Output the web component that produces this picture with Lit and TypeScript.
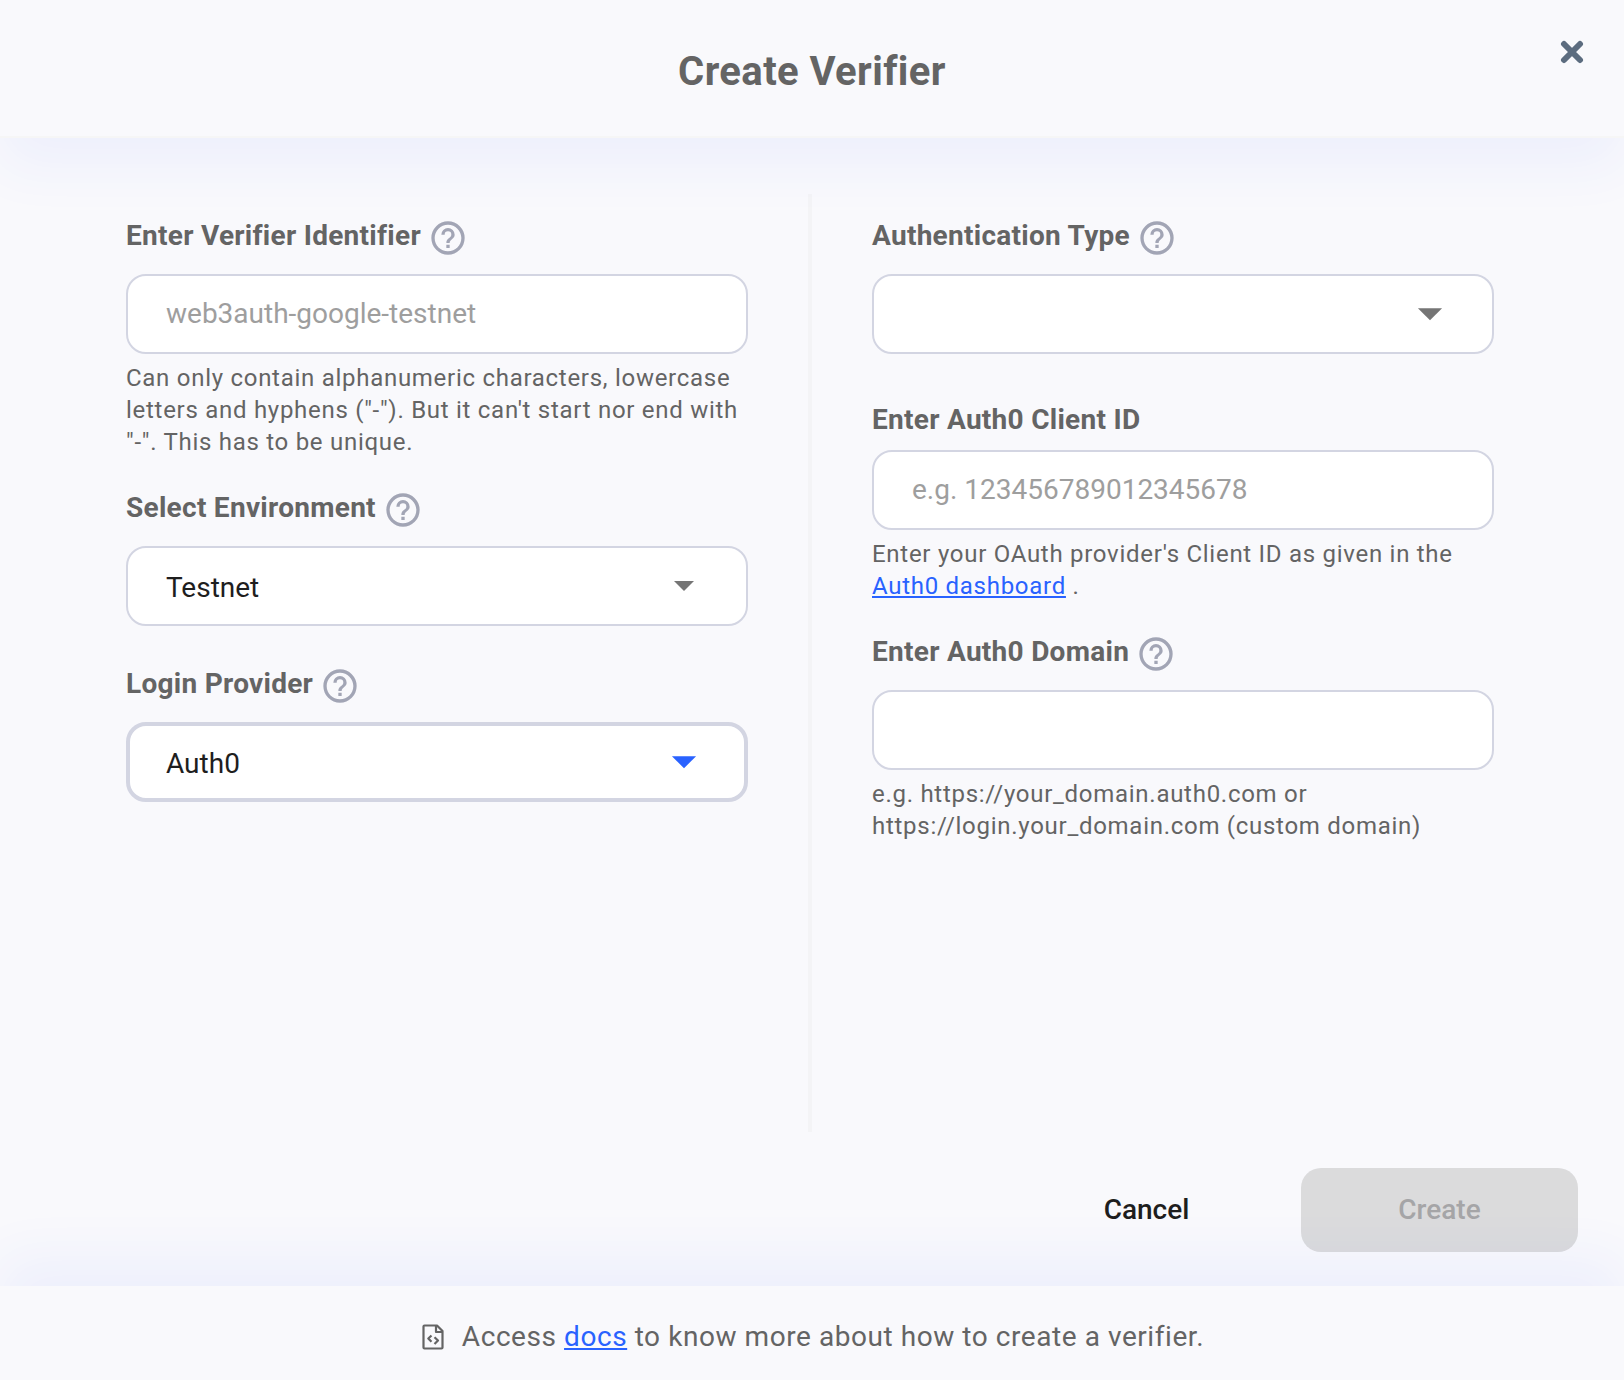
import { LitElement, html, css, svg, nothing, TemplateResult } from "lit";
import { customElement } from "lit/decorators.js";
import { classMap } from "lit/directives/class-map.js";

interface FieldSpec {
  id: string;
  label: string;
  help?: boolean;
  placeholder?: string;
  options?: string[];
  value?: string;
  active?: boolean;
  largeCaret?: boolean;
  hint?: TemplateResult;
}

const leftFields: FieldSpec[] = [
  {
    id: "verifier-id",
    label: "Enter Verifier Identifier",
    help: true,
    placeholder: "web3auth-google-testnet",
    hint: html`Can only contain alphanumeric characters, lowercase letters and hyphens ("-"). But it can't start nor end with "-". This has to be unique.`,
  },
  { id: "environment", label: "Select Environment", help: true, options: ["Testnet"], value: "Testnet" },
  { id: "provider", label: "Login Provider", help: true, options: ["Auth0"], value: "Auth0", active: true, largeCaret: true },
];

const rightFields: FieldSpec[] = [
  { id: "auth-type", label: "Authentication Type", help: true, options: [""], value: "", largeCaret: true },
  {
    id: "client-id",
    label: "Enter Auth0 Client ID",
    placeholder: "e.g. 123456789012345678",
    hint: html`Enter your OAuth provider's Client ID as given in the <a href="#dashboard">Auth0 dashboard</a> .`,
  },
  {
    id: "domain",
    label: "Enter Auth0 Domain",
    help: true,
    placeholder: "",
    hint: html`e.g. https://your_domain.auth0.com or https://login.your_domain.com (custom domain)`,
  },
];

const helpGlyph = svg`<path d="M11,18H13V16H11V18M12,2A10,10 0 0,0 2,12A10,10 0 0,0 12,22A10,10 0 0,0 22,12A10,10 0 0,0 12,2M12,20C7.59,20 4,16.41 4,12C4,7.59 7.59,4 12,4C16.41,4 20,7.59 20,12C20,16.41 16.41,20 12,20M12,6A4,4 0 0,0 8,10H10A2,2 0 0,1 12,8A2,2 0 0,1 14,10C14,12 11,11.75 11,15H13C13,12.75 16,12.5 16,10A4,4 0 0,0 12,6Z"/>`;

@customElement("app-root")
export class AppRoot extends LitElement {
  static styles = css`
    :host {
      display: flex;
      flex-direction: column;
      min-height: 100vh;
      background: #f9f9fc;
      color: #646464;
      font-family: Roboto, "Liberation Sans", sans-serif;
      font-size: 28px;
      --tracking-heading: 0.01em;
      --tracking-body: 0.02em;
      --tracking-caption: 0.03em;
    }
    *, *::before, *::after { box-sizing: border-box; }
    svg { display: block; fill: currentColor; }
    button { font: inherit; border: 0; background: none; padding: 0; cursor: pointer; }
    a { color: #2962ff; }
    .header {
      position: relative;
      display: grid;
      grid-template-columns: 1fr auto 1fr;
      align-items: start;
      padding: 0 40px;
      background: #f9f9fc;
      border-bottom: 2px solid #f6f6f6;
      box-shadow: 0 28px 56px rgba(46, 91, 255, 0.06);
    }
    .title {
      grid-column: 2;
      margin: 0;
      padding: 48px 0 40px;
      font-size: 40px;
      line-height: 48px;
      font-weight: 700;
      letter-spacing: var(--tracking-heading);
    }
    .close { justify-self: end; margin-top: 40px; color: #5c6c7f; }
    .close svg { width: 24px; height: 24px; }
    .body { flex: 1; display: grid; grid-template-columns: 1fr 1fr; padding: 56px 64px 36px; }
    .column { display: flex; flex-direction: column; gap: 32px; padding: 24px 66px 0 60px; }
    .column:first-child { padding: 24px 60px 0 62px; border-right: 4px solid #f4f4f6; }
    .field { display: flex; flex-direction: column; }
    .picker { padding-bottom: 8px; }
    .label-row { display: flex; align-items: flex-start; gap: 7px; margin-bottom: 12px; }
    .plain { padding-top: 8px; }
    .label { font-weight: 700; line-height: 36px; letter-spacing: var(--tracking-heading); }
    .help { color: #a2a5b5; margin-bottom: 4px; }
    .help svg { width: 40px; height: 40px; }
    .box { display: grid; align-items: center; }
    .control {
      grid-area: 1 / 1;
      width: 100%;
      height: 80px;
      margin: 0;
      padding: 0 38px 2px;
      border: 2px solid #d3d5e2;
      border-radius: 20px;
      background: #fff;
      color: #1e1e1e;
      font: inherit;
      outline: none;
      appearance: none;
    }
    select.control { padding-top: 4px; }
    .control::placeholder { color: #9e9e9e; opacity: 1; }
    .active { border-width: 4px; padding-left: 36px; }
    .caret { grid-area: 1 / 1; justify-self: end; margin-right: 40px; padding-bottom: 2px; color: #757575; pointer-events: none; }
    .caret svg { width: 48px; height: 48px; }
    .caret-large { margin-right: 35px; }
    .caret-large svg { width: 58px; height: 58px; }
    .caret-active { color: #2962ff; }
    .hint { margin: 8px 0 0; font-size: 24px; line-height: 32px; letter-spacing: var(--tracking-caption); }
    .actions { display: flex; justify-content: flex-end; gap: 16px; padding: 0 46px 34px; }
    .action { height: 84px; min-width: 277px; padding-bottom: 2px; border-radius: 20px; font-weight: 500; }
    .cancel { color: #1e1e1e; }
    .create { background: #dbdbdc; color: #a5a5a7; }
    .footer {
      position: relative;
      display: flex;
      justify-content: center;
      align-items: center;
      gap: 16px;
      padding: 31px 0 23px;
      background: #f9f9fc;
      box-shadow: 0 -28px 56px rgba(46, 91, 255, 0.06);
    }
    .footer-text { margin: 0; line-height: 40px; letter-spacing: var(--tracking-body); }
    .doc svg { width: 26px; height: 28px; fill: none; stroke: currentColor; }
  `;

  private renderField(f: FieldSpec) {
    const isSelect = f.options !== undefined;
    return html`
      <div class=${classMap({ field: true, picker: isSelect })}>
        <div class=${classMap({ "label-row": true, plain: !f.help })}>
          <label class="label" for=${f.id}>${f.label}</label>
          ${f.help
            ? html`<button class="help" type="button" aria-label="Help"><svg viewBox="0 0 24 24">${helpGlyph}</svg></button>`
            : nothing}
        </div>
        <div class="box">
          ${isSelect
            ? html`<select id=${f.id} class=${classMap({ control: true, active: !!f.active })}>
                  ${f.options!.map((o) => html`<option ?selected=${o === f.value}>${o}</option>`)}
                </select>
                <span class=${classMap({ caret: true, "caret-large": !!f.largeCaret, "caret-active": !!f.active })}>
                  <svg viewBox="0 0 24 24"><path d="M7,10L12,15L17,10H7Z" /></svg>
                </span>`
            : html`<input id=${f.id} class="control" type="text" placeholder=${f.placeholder ?? ""} />`}
        </div>
        ${f.hint ? html`<p class="hint">${f.hint}</p>` : nothing}
      </div>
    `;
  }

  render() {
    return html`
      <header class="header">
        <h1 class="title">Create Verifier</h1>
        <button class="close" type="button" aria-label="Close">
          <svg viewBox="0 0 24 24"><path d="M4 4L20 20M20 4L4 20" stroke="currentColor" stroke-width="6" stroke-linecap="round" /></svg>
        </button>
      </header>
      <main class="body">
        <section class="column">${leftFields.map((f) => this.renderField(f))}</section>
        <section class="column">${rightFields.map((f) => this.renderField(f))}</section>
      </main>
      <div class="actions">
        <button class="action cancel" type="button">Cancel</button>
        <button class="action create" type="button" disabled>Create</button>
      </div>
      <footer class="footer">
        <span class="doc">
          <svg viewBox="0 0 26 28" stroke-width="2.2" stroke-linejoin="round">
            <path d="M4.5 2.5H17L22.5 8V24.5a1 1 0 0 1-1 1H4.500a1 1 0 0 1-1-1V3.500a1 1 0 0 1 1-1Z" />
            <path d="M16 2.500V9H22.500M11.500 12.500L8.300 15.500L11.500 18.800M14.500 14.200L18 17.500L14.500 21" />
          </svg>
        </span>
        <p class="footer-text">Access <a href="#docs">docs</a> to know more about how to create a verifier.</p>
      </footer>
    `;
  }
}
